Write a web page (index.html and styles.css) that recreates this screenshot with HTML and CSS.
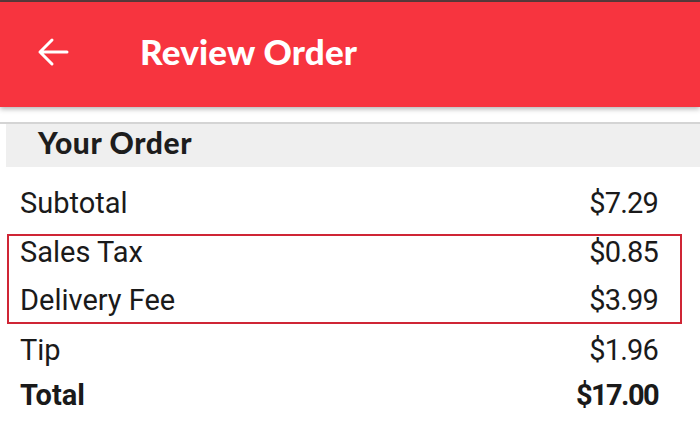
FILE: index.html
```html
<!DOCTYPE html>
<html>
<head>
<meta charset="utf-8">
<link rel="stylesheet" href="styles.css">
</head>
<body>
<div class="topline"></div>
<header class="appbar">
  <svg class="back" width="32" height="32" viewBox="0 0 32 32">
    <path d="M30 16H3M15 4L3 16l12 12" fill="none" stroke="#fff" stroke-width="3" stroke-linecap="round" stroke-linejoin="round"/>
  </svg>
  <h1 class="title">Review Order</h1>
</header>
<div class="gap"></div>
<div class="divider"></div>
<div class="section">Your Order</div>
<div class="rows">
  <div class="row"><span>Subtotal</span><span class="val">$7.29</span></div>
  <div class="highlight">
    <div class="row first"><span>Sales Tax</span><span class="val">$0.85</span></div>
    <div class="row second"><span>Delivery Fee</span><span class="val">$3.99</span></div>
  </div>
  <div class="row"><span>Tip</span><span class="val">$1.96</span></div>
  <div class="row total"><span>Total</span><span class="val">$17.00</span></div>
</div>
</body>
</html>
```
FILE: styles.css
```css
html, body {
  margin: 0;
  padding: 0;
  background: #fff;
  width: 700px;
  height: 425px;
  overflow: hidden;
}
.topline {
  height: 2px;
  background: #5a3a3c;
}
.appbar {
  height: 105px;
  background: #f7343f;
  display: flex;
  align-items: center;
  box-shadow: 0 2px 5px rgba(0,0,0,0.3);
  position: relative;
}
.back {
  margin-left: 37px;
  margin-top: -6px;
}
.title {
  margin: -8px 0 0 71px;
  color: #fff;
  font-family: Lato, "Noto Sans", sans-serif;
  font-weight: 900;
  font-size: 35px;
  letter-spacing: 0.2px;
}
.gap {
  height: 15px;
}
.divider {
  height: 2px;
  background: #d4d4d4;
}
.section {
  margin-left: 6px;
  height: 43px;
  background: #efefef;
  display: flex;
  align-items: center;
  padding-left: 32px;
  padding-bottom: 8px;
  box-sizing: border-box;
  font-family: Lato, "Noto Sans", sans-serif;
  font-weight: 900;
  font-size: 30px;
  letter-spacing: 0.6px;
  color: #1d1d1d;
}
.rows {
  padding-top: 12px;
  font-family: Roboto, "Noto Sans", sans-serif;
  font-size: 29px;
  color: #1a1a1a;
}
.row {
  display: flex;
  justify-content: space-between;
  height: 48px;
  align-items: center;
  padding: 0 42px 0 20px;
}
.val {
  letter-spacing: -0.8px;
}
.highlight {
  margin: 7px 18px 2px 7px;
  border: 2px solid #cf2535;
  padding-bottom: 2px;
}
.highlight .row {
  padding: 0 22px 0 11px;
}
.highlight .first {
  height: 32px;
}
.highlight .second {
  height: 40px;
  margin-top: 12px;
}
.total {
  font-weight: 700;
  height: 42px;
}
.total .val {
  letter-spacing: -1.6px;
}
```
